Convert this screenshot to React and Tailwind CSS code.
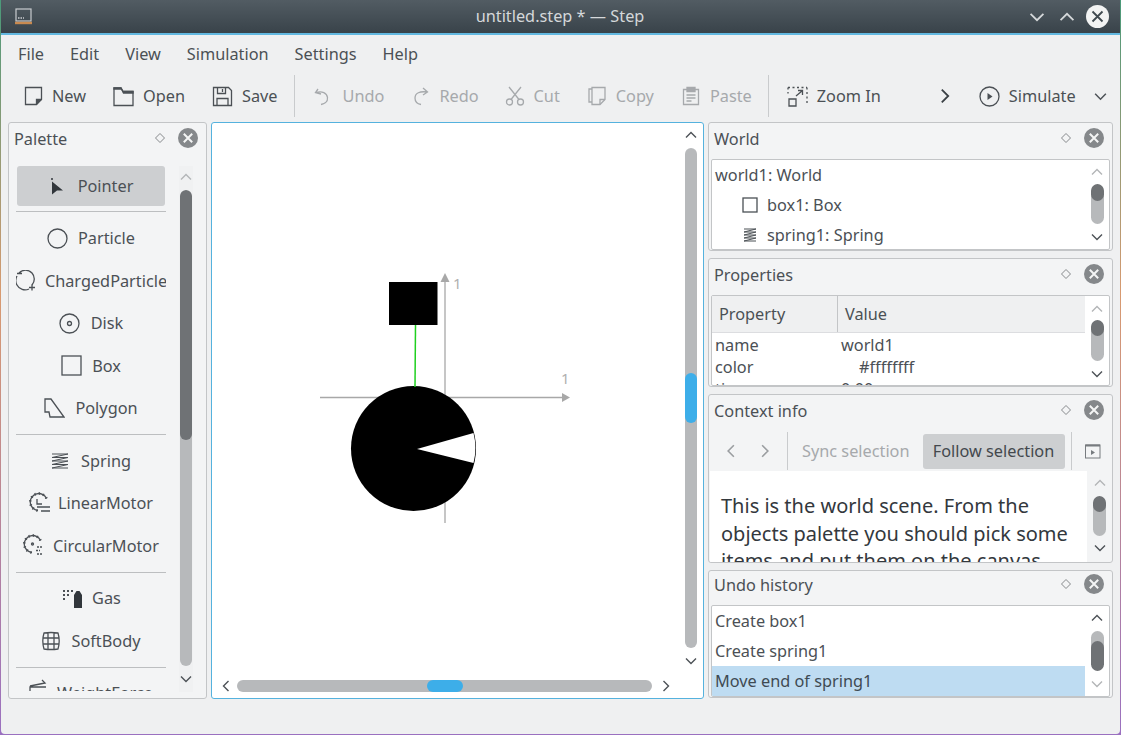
import React from "react";

const Ico = ({ s = 20, v = 20, c = "", children }) => (
  <svg width={s} height={s} viewBox={`0 0 ${v} ${v}`} fill="none" stroke="currentColor" strokeWidth="1.3" className={`shrink-0 ${c}`}>
    {children}
  </svg>
);

const Chev = ({ d = "up", c = "text-[#4d5257]", s = 14 }) => {
  const p = { up: "M2 9.5 7 4.5l5 5", down: "M2 4.5l5 5 5-5", left: "M9.5 2 4.5 7l5 5", right: "M4.5 2l5 5-5 5" }[d];
  return (
    <svg width={s} height={s} viewBox="0 0 14 14" fill="none" stroke="currentColor" strokeWidth="1.4" className={`shrink-0 ${c}`}>
      <path d={p} />
    </svg>
  );
};

const VBar = ({ w = "w-[13px]", top, thumb, track, upC, downC, topGap = "h-[7px]", botGap = "h-[5px]", thumbC = "bg-[#6f7275]", before = 0, trackC = "bg-[#b7b9bb]", extra = "" }) => (
  <div className={`flex flex-col items-center shrink-0 ${extra}`}>
    <div className={topGap} />
    <Chev d="up" c={upC || "text-[#4d5257]"} />
    <div style={{ height: top }} className="shrink-0" />
    <div className={`${w} ${trackC} rounded-full overflow-hidden shrink-0`} style={{ height: track }}>
      <div style={{ height: before }} />
      <div className={`${thumbC} rounded-full w-full`} style={{ height: thumb }} />
    </div>
    <div className={botGap} />
    <Chev d="down" c={downC || "text-[#4d5257]"} />
  </div>
);

const CloseDot = () => (
  <svg width="20" height="20" viewBox="0 0 20 20" className="shrink-0">
    <circle cx="10" cy="10" r="10" fill="#85888b" />
    <path d="M5.8 5.8l8.4 8.4M14.2 5.8l-8.4 8.4" stroke="#f4f5f5" strokeWidth="2" />
  </svg>
);

const DockHead = ({ title, h = "h-[36px] pb-[4px]" }) => (
  <div className={`${h} flex items-center pl-[5px] pr-[8px] shrink-0`}>
    <span className="flex-1">{title}</span>
    <svg width="12" height="12" viewBox="0 0 12 12" className="mr-[12px] -mt-[2px] shrink-0">
      <path d="M6 1.5 10.5 6 6 10.5 1.5 6z" fill="none" stroke="#85888b" strokeWidth="1" />
    </svg>
    <div className="-mt-[2px]"><CloseDot /></div>
  </div>
);

const Dock = ({ title, h, head, children }) => (
  <div className={`${h} shrink-0 border border-[#c3c5c7] rounded-[3px] bg-[#f3f4f5] flex flex-col overflow-hidden`}>
    <DockHead title={title} h={head} />
    {children}
  </div>
);

const Sep = ({ h = "h-[11px]" }) => (
  <div className={`${h} flex items-center shrink-0`}>
    <div className="h-[1px] w-full bg-[#bcbec0]" />
  </div>
);

const Row = ({ icon, label, gap = "gap-[8px]" }) => (
  <div className={`h-[42.5px] shrink-0 flex items-center justify-center ${gap} whitespace-nowrap`}>
    {icon}
    <span>{label}</span>
  </div>
);

const TB = ({ icon, label, dis, ml }) => (
  <div className={`flex items-center gap-[9px] shrink-0 ${ml} ${dis ? "text-[#a6a9ac]" : ""}`}>
    {icon}
    <span>{label}</span>
  </div>
);

const ToolSep = ({ ml }) => <div className={`w-[1px] h-[42px] bg-[#c9cbcd] shrink-0 ${ml}`} />;

const Gear = () => (
  <>
    <path d="M17.500 6.500A8.500 8.500 0 1 0 9 18.500" />
    <path d="M17.500 6.500A8.500 8.500 0 1 0 9 18.500" strokeWidth="2.600" strokeDasharray="1.200 3" />
  </>
);

export default function App() {
  return (
    <div className="w-[1121px] h-[735px] overflow-hidden bg-[linear-gradient(180deg,#4a9a7a_0%,#d89a70_40%,#9a70c0_100%)] pl-[1px] pr-[1px] pb-[1px] text-[16.3px] text-[#4b5055] font-['Noto_Sans',sans-serif] leading-none">
      <div className="h-full flex flex-col bg-[#eff0f1] rounded-b-[4px] overflow-hidden">
        {/* title bar */}
        <div className="h-[33px] shrink-0 bg-[linear-gradient(180deg,#525c63,#39434a)] flex items-center pl-[13px] pr-[11px] text-[#d5d8da]">
          <svg width="20" height="20" viewBox="0 0 20 20" className="shrink-0" fill="none">
            <rect x="2" y="2" width="15" height="12" stroke="#c9cccf" strokeWidth="1.2" />
            <path d="M4 11h6" stroke="#c9cccf" strokeWidth="1.5" strokeDasharray="1.5 1" />
            <path d="M1 16h17" stroke="#c98a50" strokeWidth="2.4" />
          </svg>
          <div className="flex-1 text-center pl-[58px] pb-[1px]">untitled.step * — Step</div>
          <Chev d="down" s={18} c="text-[#d5d8da] mr-[12px]" />
          <Chev d="up" s={18} c="text-[#d5d8da] mr-[10px]" />
          <svg width="23" height="23" viewBox="0 0 23 23" className="shrink-0">
            <circle cx="11.5" cy="11.5" r="11.5" fill="#f2f3f3" />
            <path d="M6.5 6.5l10 10M16.5 6.5l-10 10" stroke="#3f494f" strokeWidth="1.8" />
          </svg>
        </div>
        <div className="h-[2px] shrink-0 bg-[#62b8e0]" />

        {/* menu */}
        <div className="h-[37px] shrink-0 flex items-center pl-[17px] pt-[2px]">
          <span className="mr-[26px]">File</span>
          <span className="mr-[26px]">Edit</span>
          <span className="mr-[26px]">View</span>
          <span className="mr-[26px]">Simulation</span>
          <span className="mr-[26px]">Settings</span>
          <span>Help</span>
        </div>

        {/* toolbar */}
        <div className="h-[50px] shrink-0 flex items-center pl-[22px] pb-[2px]">
          <TB label="New" icon={<Ico><path d="M2.5 1.5h16v12l-5 5h-11z" /><path d="M18.5 13.5h-5v5" fill="currentColor" /></Ico>} />
          <TB ml="ml-[27px]" label="Open" icon={<Ico s={21} v={21}><path d="M1 4.5v15h19V5.5H10L8 2H1z" /><path d="M1 3h7.5l2 4H20V5.5H10L8 2H1z" fill="currentColor" /></Ico>} />
          <TB ml="ml-[27px]" label="Save" icon={<Ico s={21} v={21}><path d="M1.5 1.5h15l3 3v15h-18z" /><path d="M5.5 1.5v6h8v-6M10.5 3v3M5 19.5v-7h11v7" /></Ico>} />
          <ToolSep ml="ml-[16px]" />
          <TB dis ml="ml-[19px]" label="Undo" icon={<Ico><path d="M4 3l-2.5 3.5L7 8M2 6.5c6-2 11 .5 11.500 5S10 18 7 18.500" /></Ico>} />
          <TB dis ml="ml-[26px]" label="Redo" icon={<Ico><path d="M13 2l4.500 4-4.500 3M17 6C10 5 5 7 5 12s3 6 6 6.500" /></Ico>} />
          <TB dis ml="ml-[26px]" label="Cut" icon={<Ico><circle cx="4.500" cy="16" r="3" /><circle cx="15.500" cy="16" r="3" /><path d="M6 13.500 16 1M14 13.500 4 1" /></Ico>} />
          <TB dis ml="ml-[27px]" label="Copy" icon={<Ico><path d="M5 3H2v13h3" /><path d="M5 1.500h8l0 0h5v12l-5 5H5z" /><path d="M18 13.500h-5v5" /></Ico>} />
          <TB dis ml="ml-[27px]" label="Paste" icon={<Ico><path d="M6 3.500H2.500v15h15v-15H14" /><path d="M6 1.500h8v4H6z" fill="currentColor" /><path d="M5.500 9h9M5.500 12h9M5.500 15h5" /></Ico>} />
          <ToolSep ml="ml-[16px]" />
          <TB ml="ml-[18px]" label="Zoom In" icon={<Ico s={21} v={21}><path d="M1 1.500h19M1 1.500v6M20 1.500v18" strokeDasharray="2 2.500" /><path d="M2 13h7v7H2z" /><path d="M9 10l6-5M11 4.500h4.500V9" /></Ico>} />
          <div className="ml-[55px]"><Chev d="right" s={18} c="text-[#3a4045]" /></div>
          <TB ml="ml-[25px]" label="Simulate" icon={<Ico s={21} v={21}><circle cx="10.500" cy="10.500" r="9.500" /><path d="M8.500 7l5 3.500-5 3.500z" fill="currentColor" stroke="none" /></Ico>} />
          <div className="ml-[17px]"><Chev d="down" s={15} /></div>
        </div>

        {/* main */}
        <div className="h-[577px] shrink-0 flex pl-[7px] gap-[4px]">
          {/* palette */}
          <div className="w-[199px] shrink-0 border border-[#c3c5c7] rounded-[3px] bg-[#f3f4f5] flex flex-col overflow-hidden">
            <DockHead title="Palette" h="h-[32px]" />
            <div className="flex-1 min-h-0 flex pl-[7px] pr-[4px] pt-[11px] pb-[6px]">
              <div className="w-[150px] h-[525px] overflow-hidden shrink-0">
                <div className="h-[40px] mx-[1px] flex items-center justify-center gap-[13px] bg-[#cdcfd1] rounded-[3px]">
                  <svg width="16" height="20" viewBox="0 0 16 20"><circle cx="3" cy="3" r="1" fill="#31363b" /><path d="M3 5.500v13l5-4 6 0z" fill="#31363b" /></svg>
                  <span>Pointer</span>
                </div>
                <Sep />
                <Row label="Particle" gap="gap-[10px]" icon={<Ico s={21} v={21}><circle cx="10.500" cy="10.500" r="9.500" /></Ico>} />
                <Row label="ChargedParticle" gap="gap-[9px]" icon={<Ico s={21} v={21}><path d="M4 3a9 9 0 0 1 13 0a9 9 0 0 1 0 12M14 19a9 9 0 0 1-12-4 9 9 0 0 1 0-9M2 3.500h5" /><path d="M14 17.500h6M17 14.500v6" /></Ico>} />
                <Row label="Disk" gap="gap-[11px]" icon={<Ico s={21} v={21}><circle cx="10.500" cy="10.500" r="9.500" /><circle cx="10.500" cy="10.500" r="2" /></Ico>} />
                <Row label="Box" gap="gap-[10px]" icon={<Ico s={21} v={21}><rect x="1" y="1" width="19" height="19" /></Ico>} />
                <Row label="Polygon" gap="gap-[10px]" icon={<Ico s={21} v={21}><path d="M1 1h6l13 18H6l-1-5H1z" /></Ico>} />
                <Sep h="h-[10px]" />
                <Row label="Spring" gap="gap-[12px]" icon={<Ico s={18} v={18}><path strokeWidth="1" d="M1 2h16L1 5.500h16L1 9h16L1 12.500h16L1 16h16" /></Ico>} />
                <Row label="LinearMotor" gap="gap-[6px]" icon={<Ico s={23} v={23}><Gear /><path d="M8 7v5h5M8 15h13M12 19h9" /></Ico>} />
                <Row label="CircularMotor" gap="gap-[7px]" icon={<Ico s={23} v={23}><Gear /><circle cx="9.500" cy="10" r="1" /><path d="M14 13h6M13 16.500h4M14 20h6" strokeDasharray="2 1" /></Ico>} />
                <Sep h="h-[10px]" />
                <Row label="Gas" gap="gap-[9px]" icon={<svg width="22" height="22" viewBox="0 0 22 22" className="shrink-0"><path d="M13 21V8l2.500-4h3L21 8v13z" fill="#31363b" /><path d="M2 3h2v2H2zM6 3h2v2H6zM10 3h2v2h-2zM2 7h2v2H2zM6 7h2v2H6zM2 11h2v2H2z" fill="#4b5055" /></svg>} />
                <Row label="SoftBody" gap="gap-[10px]" icon={<Ico s={20} v={20}><path d="M3 2c4-.6 10-.6 14 0 1.500 5 1.500 11 0 16-4 .6-10 .6-14 0-1.500-5-1.500-11 0-16zM7 1.500v17M13 1.500v17M2 7h16M2 13h16" /></Ico>} />
                <Sep h="h-[10px]" />
                <Row label="WeightForce" gap="gap-[10px]" icon={<Ico s={18} v={18} c="-mt-[12px]"><path d="M1 8l15-3-3-3M17 9H1v5" /></Ico>} />
              </div>
              <div className="flex-1 flex justify-center pl-[3px]">
                <VBar w="w-[12px]" upC="text-[#b3b5b7]" topGap="h-[4px]" top={6} track={476} thumb={250} botGap="h-[6px]" extra="bg-[#f0f1f2]" />
              </div>
            </div>
          </div>

          {/* canvas */}
          <div className="w-[493px] shrink-0 border border-[#55b2de] rounded-[3px] bg-white flex flex-col overflow-hidden">
            <div className="flex-1 min-h-0 flex">
              <svg width="466" height="549" viewBox="212 123 466 549" className="shrink-0">
                <path d="M320 397.500h246" stroke="#a8a8a8" strokeWidth="1.300" />
                <path d="M570 397.500l-8-4.500v9z" fill="#a8a8a8" />
                <path d="M445 523V279" stroke="#a8a8a8" strokeWidth="1.300" />
                <path d="M445 273l-4.500 9h9z" fill="#a8a8a8" />
                <text x="453" y="289" fill="#b0b0b0" fontSize="15">1</text>
                <text x="561" y="384" fill="#b0b0b0" fontSize="15">1</text>
                <circle cx="413.500" cy="448.500" r="62.500" fill="#000" />
                <path d="M417 449l56.500-16c2.500 10 2.500 20 0 30z" fill="#fff" />
                <rect x="389" y="282" width="48.500" height="43" fill="#000" />
                <path d="M415.500 325l-.5 62" stroke="#1fd01f" strokeWidth="1.500" />
              </svg>
              <div className="flex-1 flex justify-center">
                <VBar w="w-[12px]" topGap="h-[5px]" top={6} track={500} before={225} thumb={50} thumbC="bg-[#3daee9]" botGap="h-[6px]" />
              </div>
            </div>
            <div className="h-[26px] shrink-0 flex items-center pl-[7px] pt-[1px]">
              <Chev d="left" />
              <div className="w-[415px] h-[12px] ml-[4px] bg-[#b7b9bb] rounded-full overflow-hidden flex shrink-0">
                <div className="w-[190px] shrink-0" />
                <div className="w-[36px] bg-[#3daee9] rounded-full shrink-0" />
              </div>
              <div className="ml-[7px]"><Chev d="right" /></div>
            </div>
          </div>

          {/* right docks */}
          <div className="w-[405px] shrink-0 flex flex-col gap-[7px]">
            <Dock title="World" h="h-[129px]">
              <div className="flex-1 min-h-0 mx-[2px] border border-[#c3c5c7] rounded-[2px] bg-white flex overflow-hidden">
                <div className="flex-1 pl-[3px]">
                  <div className="h-[30px] flex items-center">world1: World</div>
                  <div className="h-[30px] flex items-center pl-[27px] gap-[9px]">
                    <Ico s={16} v={16}><rect x="1" y="1" width="14" height="14" /></Ico>
                    box1: Box
                  </div>
                  <div className="h-[30px] flex items-center pl-[27px] gap-[9px]">
                    <Ico s={16} v={16}><path strokeWidth="1" d="M2 2h12L2 5h12L2 8h12L2 11h12L2 14h12" /></Ico>
                    spring1: Spring
                  </div>
                </div>
                <div className="w-[24px] shrink-0 flex justify-center">
                  <VBar upC="text-[#b3b5b7]" topGap="h-[5px]" top={5} track={40} thumb={17} botGap="h-[6px]" />
                </div>
              </div>
            </Dock>

            <Dock title="Properties" h="h-[129px]">
              <div className="flex-1 min-h-0 mx-[2px] border border-[#c3c5c7] rounded-[2px] bg-white flex overflow-hidden">
                <div className="flex-1 overflow-hidden">
                  <div className="h-[37px] bg-[#eff0f1] flex items-center border-b border-[#dcdde0]">
                    <div className="w-[126px] h-full flex items-center pl-[7px] pt-[1px] border-r border-[#c3c5c7] shrink-0">Property</div>
                    <div className="pl-[7px] pt-[1px]">Value</div>
                  </div>
                  <div className="h-[23px] flex items-center pl-[3px] pt-[1px]"><span className="w-[126px] shrink-0">name</span>world1</div>
                  <div className="h-[22px] flex items-center pl-[3px]"><span className="w-[144px] shrink-0">color</span>#ffffffff</div>
                  <div className="h-[22px] flex items-center pl-[3px]"><span className="w-[126px] shrink-0">time</span>0.00</div>
                </div>
                <div className="w-[24px] shrink-0 flex justify-center">
                  <VBar upC="text-[#b3b5b7]" topGap="h-[6px]" top={4} track={41} thumb={16} botGap="h-[6px]" />
                </div>
              </div>
            </Dock>

            <Dock title="Context info" h="h-[169px]">
              <div className="h-[39px] shrink-0 flex items-center pl-[14px] pt-[1px] text-[#a6a9ac]">
                <Chev d="left" s={16} c="text-[#9a9da0]" />
                <div className="ml-[18px]"><Chev d="right" s={16} c="text-[#9a9da0]" /></div>
                <div className="w-[1px] h-[38px] bg-[#c9cbcd] ml-[14px]" />
                <span className="ml-[14px] whitespace-nowrap">Sync selection</span>
                <div className="ml-[13px] h-[35px] w-[142px] flex items-center justify-center rounded-[3px] bg-[#cdcfd1] text-[#43484d] whitespace-nowrap">Follow selection</div>
                <div className="w-[1px] h-[38px] bg-[#c9cbcd] ml-[6px]" />
                <svg width="16" height="15" viewBox="0 0 16 15" className="ml-[13px]" fill="none" stroke="#777b7f"><rect x=".5" y="1" width="14.500" height="13" /><path d="M.5 1.500h14.500" strokeWidth="2" /><path d="M6 6l4 2.500L6 11z" fill="#777b7f" stroke="none" /></svg>
              </div>
              <div className="flex-1 min-h-0 flex overflow-hidden ml-[1px] mt-[1px]">
                <div className="w-[377px] bg-white pl-[11px] pt-[21px] text-[20px] leading-[27.500px] text-[#33383d] overflow-hidden shrink-0">
                  <p className="w-[360px]">This is the world scene. From the objects palette you should pick some items and put them on the canvas</p>
                </div>
                <div className="flex-1 flex justify-center">
                  <VBar upC="text-[#b3b5b7]" topGap="h-[5px]" top={6} track={40} thumb={16} botGap="h-[5px]" />
                </div>
              </div>
            </Dock>

            <Dock title="Undo history" h="h-[128px]" head="h-[34px] pb-[6px]">
              <div className="flex-1 min-h-0 mx-[2px] border border-[#c3c5c7] rounded-[2px] bg-white flex overflow-hidden">
                <div className="flex-1">
                  <div className="h-[30px] flex items-center pl-[3px]">Create box1</div>
                  <div className="h-[30px] flex items-center pl-[3px]">Create spring1</div>
                  <div className="h-[30px] flex items-center pl-[3px] bg-[#bedcf2] text-[#3f4a52]">Move end of spring1</div>
                </div>
                <div className="w-[24px] shrink-0 flex justify-center">
                  <VBar downC="text-[#b3b5b7]" topGap="h-[5px]" top={6} track={40} before={10} thumb={30} botGap="h-[6px]" />
                </div>
              </div>
            </Dock>
          </div>
        </div>
      </div>
    </div>
  );
}
